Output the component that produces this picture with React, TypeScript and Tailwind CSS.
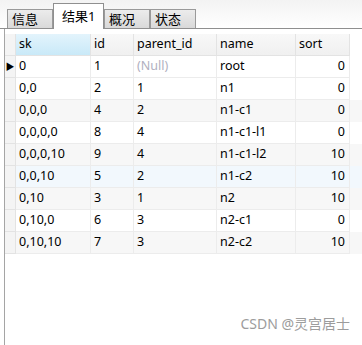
const rows: [string, string, string | null, string, string][] = [
  ['0', '1', null, 'root', '0'],
  ['0,0', '2', '1', 'n1', '0'],
  ['0,0,0', '4', '2', 'n1-c1', '0'],
  ['0,0,0,0', '8', '4', 'n1-c1-l1', '0'],
  ['0,0,0,10', '9', '4', 'n1-c1-l2', '10'],
  ['0,0,10', '5', '2', 'n1-c2', '10'],
  ['0,10', '3', '1', 'n2', '10'],
  ['0,10,0', '6', '3', 'n2-c1', '0'],
  ['0,10,10', '7', '3', 'n2-c2', '10'],
]

const tabs = ['信息', '结果1', '概况', '状态']

function rowBg(index: number) {
  if (index === 5) return 'bg-[#f2f8fd]'
  if (index % 2 === 0 && index > 0) return 'bg-[#f7f7f7]'
  return 'bg-white'
}

export default function App() {
  return (
    <div
      className="flex h-[345px] w-[362px] flex-col overflow-hidden bg-white text-black"
      style={{ fontFamily: '"Noto Sans", "Noto Sans CJK SC", sans-serif' }}
    >
      <div className="flex h-[29px] items-end border-b border-[#8f8f8f] bg-gradient-to-b from-[#f3f3f3] to-white pl-[7px]">
        {tabs.map((tab, i) =>
          i === 1 ? (
            <div
              key={tab}
              className="mb-[-1px] flex h-[26px] w-[51px] items-center border border-b-0 border-[#8f8f8f] bg-white pl-[8px] text-[13px]"
            >
              {tab}
            </div>
          ) : (
            <div
              key={tab}
              className="flex h-[19px] w-[46px] items-center border border-b-0 border-[#9a9a9a] bg-gradient-to-b from-[#ececec] to-[#d9d9d9] pl-[4px] text-[13px] leading-none"
            >
              {tab}
            </div>
          )
        )}
      </div>

      <div className="ml-[4px] flex flex-1 flex-col border-l border-[#a5a5a5] pt-[5px]">
        <div className="flex h-[22px] text-[12.5px]">
          <div className="w-[11px] border-r border-b border-[#e3e3e3] bg-[#f4f4f4]" />
          <div className="flex w-[75px] items-center border-r border-b border-[#e3e3e3] bg-gradient-to-b from-[#e3f4fc] to-[#c9e9f8] pl-[3px]">
            sk
          </div>
          <div className="flex w-[43px] items-center border-r border-b border-[#e3e3e3] bg-gradient-to-b from-[#f8f8f8] to-[#f0f0f0] pl-[3px]">
            id
          </div>
          <div className="flex w-[83px] items-center border-r border-b border-[#e3e3e3] bg-gradient-to-b from-[#f8f8f8] to-[#f0f0f0] pl-[3px]">
            parent_id
          </div>
          <div className="flex w-[79px] items-center border-r border-b border-[#e3e3e3] bg-gradient-to-b from-[#f8f8f8] to-[#f0f0f0] pl-[3px]">
            name
          </div>
          <div className="flex w-[54px] items-center border-r border-b border-[#e3e3e3] bg-gradient-to-b from-[#f8f8f8] to-[#f0f0f0] pl-[3px]">
            sort
          </div>
        </div>

        {rows.map(([sk, id, parentId, name, sort], i) => (
          <div key={sk} className={`flex h-[22px] text-[12.5px] ${rowBg(i)}`}>
            <div className="flex w-[11px] items-center justify-center border-r border-b border-[#e3e3e3] bg-[#f4f4f4] text-[9px] leading-none">
              {i === 0 ? '▶' : ''}
            </div>
            <div className="flex w-[75px] items-center border-r border-b border-[#ececec] pl-[3px]">{sk}</div>
            <div className="flex w-[43px] items-center border-r border-b border-[#ececec] pl-[3px]">{id}</div>
            <div className="flex w-[83px] items-center border-r border-b border-[#ececec] pl-[3px]">
              {parentId ?? <span className="text-[#b0b0c0]">(Null)</span>}
            </div>
            <div className="flex w-[79px] items-center border-r border-b border-[#ececec] pl-[3px]">{name}</div>
            <div className="flex w-[54px] items-center justify-end border-r border-b border-[#ececec] pr-[4px]">
              {sort}
            </div>
          </div>
        ))}

        <div className="mt-auto mb-[11px] flex justify-end pr-[12px] text-[14px] text-[#9c9c9c]">
          CSDN @灵宫居士
        </div>
      </div>
    </div>
  )
}
